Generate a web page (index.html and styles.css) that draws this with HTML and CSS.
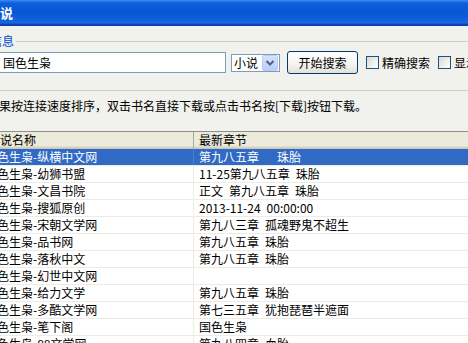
FILE: index.html
```html
<!DOCTYPE html>
<html lang="zh-CN">
<head>
    <meta charset="UTF-8">
    <title>搜索小说</title>
    <link rel="stylesheet" href="styles.css">
</head>
<body>

<div class="titlebar">
    <span class="title">搜索小说</span>
</div>

<main class="dialog">
    <fieldset class="search-group">
        <legend>搜索信息</legend>
        <div class="search-row">
            <input class="keyword" type="text" value="国色生枭">
            <div class="combo">
                <span class="combo-value">小说</span>
                <span class="combo-arrow">
                    <svg width="16" height="16" viewBox="0 0 16 16">
                        <path d="M4.5 6 L8 9.5 L11.5 6" fill="none" stroke="#4D6185" stroke-width="2"/>
                    </svg>
                </span>
            </div>
            <button class="search-btn">开始搜索</button>
            <label class="check"><span class="box"></span>精确搜索</label>
            <label class="check"><span class="box"></span>显示全部</label>
        </div>
    </fieldset>

    <p class="hint">搜索结果按连接速度排序，双击书名直接下载或点击书名按[下载]按钮下载。</p>

    <div class="list">
        <div class="list-head">
            <div class="head-cell col-name">小说名称</div>
            <div class="head-cell col-chapter">最新章节</div>
        </div>
        <div class="row selected"><div class="cell col-name">国色生枭-纵横中文网</div><div class="cell col-chapter">第九八五章&ensp;&ensp;&ensp;珠胎</div></div>
        <div class="row"><div class="cell col-name">国色生枭-幼狮书盟</div><div class="cell col-chapter">11-25第九八五章&ensp;珠胎</div></div>
        <div class="row"><div class="cell col-name">国色生枭-文昌书院</div><div class="cell col-chapter">正文&ensp;第九八五章&ensp;珠胎</div></div>
        <div class="row"><div class="cell col-name">国色生枭-搜狐原创</div><div class="cell col-chapter">2013-11-24&ensp;00:00:00</div></div>
        <div class="row"><div class="cell col-name">国色生枭-宋朝文学网</div><div class="cell col-chapter">第九八三章&ensp;孤魂野鬼不超生</div></div>
        <div class="row"><div class="cell col-name">国色生枭-品书网</div><div class="cell col-chapter">第九八五章&ensp;珠胎</div></div>
        <div class="row"><div class="cell col-name">国色生枭-落秋中文</div><div class="cell col-chapter">第九八五章&ensp;珠胎</div></div>
        <div class="row"><div class="cell col-name">国色生枭-幻世中文网</div><div class="cell col-chapter"></div></div>
        <div class="row"><div class="cell col-name">国色生枭-给力文学</div><div class="cell col-chapter">第九八五章&ensp;珠胎</div></div>
        <div class="row"><div class="cell col-name">国色生枭-多酷文学网</div><div class="cell col-chapter">第七三五章&ensp;犹抱琵琶半遮面</div></div>
        <div class="row"><div class="cell col-name">国色生枭-笔下阁</div><div class="cell col-chapter">国色生枭</div></div>
        <div class="row"><div class="cell col-name">国色生枭-88文学网</div><div class="cell col-chapter">第九八四章&ensp;血胎</div></div>
    </div>
</main>

</body>
</html>
```

FILE: styles.css
```css
body {
    margin: 0;
    width: 468px;
    height: 343px;
    overflow: hidden;
    background: #F1F1ED;
    font-family: "Noto Sans CJK SC", sans-serif;
    font-size: 12px;
    color: #000;
}

.titlebar {
    height: 26px;
    display: flex;
    align-items: center;
    background: linear-gradient(to bottom, #3A8CF4 0, #0E5FDB 3px, #0756D6 50%, #1262DD 80%, #1A68E2 88%, #0B47BE 93%, #0839A6 100%);
    overflow: hidden;
}

.title {
    color: #fff;
    font-weight: bold;
    font-size: 13px;
    line-height: 16px;
    margin-left: -39px;
    margin-top: -1px;
    white-space: nowrap;
}

.search-group {
    margin: 8px 0 0 -50px;
    width: 620px;
    padding: 3px 0 16px 0;
    border: 1px solid #D0D0BF;
    border-radius: 3px;
    min-inline-size: 0;
}

.search-group legend {
    color: #0046D5;
    padding: 0 2px;
    margin-left: 13px;
    line-height: 14px;
}

.search-row {
    display: flex;
    align-items: center;
    height: 23px;
}

.keyword {
    margin: 0 0 0 48px;
    width: 227px;
    height: 21px;
    box-sizing: border-box;
    border: 1px solid #7F9DB9;
    padding: 0 0 0 3px;
    font: inherit;
    background: #fff;
    outline: none;
}

.combo {
    margin-left: 5px;
    width: 49px;
    height: 18px;
    box-sizing: border-box;
    border: 1px solid #7F9DB9;
    background: #fff;
    display: flex;
    align-items: center;
    justify-content: space-between;
}

.combo-value {
    padding-left: 2px;
    line-height: 14px;
}

.combo-arrow {
    width: 16px;
    height: 16px;
    margin-right: 1px;
    box-sizing: border-box;
    border: 1px solid #B9CCF5;
    border-radius: 2px;
    background: linear-gradient(to bottom, #D7E2FC, #BCCDF7);
    display: flex;
}

.combo-arrow svg {
    margin: -1px;
}

.search-btn {
    margin-left: 7px;
    width: 71px;
    height: 23px;
    padding: 0;
    border: 1px solid #003C74;
    border-radius: 3px;
    background: linear-gradient(to bottom, #FFFFFF, #F4F4F0 60%, #E2DFD5);
    font: inherit;
    color: #000;
}

.check {
    margin-left: 8px;
    display: flex;
    align-items: center;
    gap: 3px;
    white-space: nowrap;
}

.check + .check {
    margin-left: 8px;
}

.box {
    width: 13px;
    height: 13px;
    box-sizing: border-box;
    border: 1px solid #1C5180;
    background: linear-gradient(135deg, #D9D9D3, #F3F3EF 65%, #FFFFFF);
}

.hint {
    margin: 7px 0 0 -37px;
    line-height: 16px;
    white-space: nowrap;
}

.list {
    margin: 17px 0 0 -20px;
    width: 520px;
    background: #fff;
}

.list-head {
    display: grid;
    grid-template-columns: 214px 1fr;
    height: 18px;
    box-sizing: border-box;
    border-top: 1px solid #8E8E8A;
    background: #EBEADB;
    box-shadow: inset 0 -1px #CBC7B8, inset 0 -2px #D6D2C2, inset 0 -3px #E2DECD;
}

.head-cell {
    line-height: 16px;
    white-space: nowrap;
}

.head-cell.col-name {
    padding-left: 8px;
    border-right: 1px solid #ACA899;
}

.head-cell.col-chapter {
    padding-left: 5px;
}

.row {
    display: grid;
    grid-template-columns: 214px 1fr;
    height: 17px;
    box-sizing: border-box;
    border-bottom: 1px solid #ECECE4;
}

.cell {
    line-height: 16px;
    white-space: nowrap;
    overflow: hidden;
}

.cell.col-name {
    padding-left: 5px;
    border-right: 1px solid #ECECE4;
}

.cell.col-chapter {
    padding-left: 5px;
}

.row.selected {
    background: #316AC5;
    color: #fff;
}

.row.selected .cell.col-name {
    border-right-color: #4A7FD0;
}
```
